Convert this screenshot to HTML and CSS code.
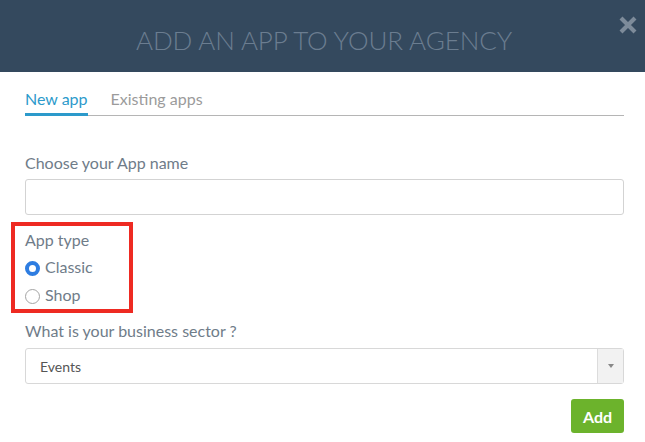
FILE: index.html
```html
<!DOCTYPE html>
<html>
<head>
<meta charset="utf-8">
<link rel="stylesheet" href="styles.css">
</head>
<body>
<div class="modal">
  <header class="modal-header">
    <h1 class="modal-title">ADD AN APP TO YOUR AGENCY</h1>
    <span class="close" aria-label="Close">
      <svg width="20" height="20" viewBox="0 0 20 20"><path d="M3 3 L17 17 M17 3 L3 17" stroke="#7d8b9a" stroke-width="4.2" stroke-linecap="butt"/></svg>
    </span>
  </header>
  <div class="modal-body">
    <nav class="tabs">
      <span class="tab active">New app</span>
      <span class="tab">Existing apps</span>
    </nav>
    <div class="field name-field">
      <label class="label">Choose your App name</label>
      <input class="input" type="text">
    </div>
    <div class="type-box">
      <div class="label">App type</div>
      <label class="radio"><span class="dot checked"></span>Classic</label>
      <label class="radio"><span class="dot"></span>Shop</label>
    </div>
    <div class="field sector-field">
      <label class="label">What is your business sector ?</label>
      <div class="select">
        <span class="select-value">Events</span>
        <span class="select-arrow"><svg width="6" height="4" viewBox="0 0 6 4"><path d="M0 0 L6 0 L3 4 Z" fill="#888"/></svg></span>
      </div>
    </div>
    <div class="actions">
      <button class="btn-add">Add</button>
    </div>
  </div>
</div>
</body>
</html>
```
FILE: styles.css
```css
* { box-sizing: border-box; }
html, body { margin: 0; padding: 0; background: #fff; }
body { font-family: Lato, "Open Sans", sans-serif; width: 645px; height: 442px; overflow: hidden; }
.modal-header {
  height: 72px;
  background: #34495e;
  display: flex;
  align-items: center;
  justify-content: center;
  position: relative;
}
.modal-title {
  margin: 0;
  font-weight: 300;
  font-size: 26px;
  color: #6b7d90;
  letter-spacing: -0.1px;
  padding-top: 8px;
  padding-left: 3px;
}
.close {
  position: absolute;
  right: 7px;
  top: 15px;
  display: flex;
}
.modal-body { padding: 0 21px 0 25px; }
.tabs {
  display: flex;
  gap: 23px;
  border-bottom: 1px solid #b5b5b5;
  margin-top: 17px;
  height: 27px;
}
.tab {
  font-size: 16px;
  color: #9b9b9b;
  line-height: 20px;
  margin-bottom: -1px;
}
.tab.active {
  color: #2c9acb;
  border-bottom: 3px solid #2c9acb;
}
.label {
  display: block;
  font-size: 16px;
  color: #6f7c89;
  line-height: 20px;
}
.name-field { margin-top: 37px; }
.input {
  display: block;
  width: 100%;
  height: 36px;
  margin-top: 6px;
  border: 1px solid #d3d3d3;
  border-radius: 3px;
  font-family: inherit;
}
.type-box {
  margin: 7px 0 0 -14px;
  width: 122px;
  height: 91px;
  border: 4px solid #ee2a22;
  padding: 4px 0 0 10px;
}
.radio {
  display: flex;
  align-items: center;
  gap: 5px;
  font-size: 16px;
  color: #6f7c89;
  line-height: 20px;
  margin-top: 7px;
}
.radio + .radio { margin-top: 8px; }
.dot {
  width: 15px;
  height: 15px;
  border-radius: 50%;
  border: 1px solid #a4a4a4;
  background: #fff;
  margin-top: 2px;
}
.dot.checked {
  border: 4px solid #2e7de1;
  background: #fff;
}
.sector-field { margin-top: 8px; }
.select {
  display: flex;
  align-items: center;
  height: 36px;
  margin-top: 7px;
  border: 1px solid #d8d8d8;
  border-radius: 3px;
}
.select-value {
  flex: 1;
  font-size: 14px;
  color: #555;
  padding-left: 14px;
}
.select-arrow {
  width: 26px;
  height: 100%;
  background: #f2f2f2;
  border-left: 1px solid #dcdcdc;
  display: flex;
  align-items: center;
  justify-content: center;
}
.actions {
  display: flex;
  justify-content: flex-end;
  margin-top: 15px;
}
.btn-add {
  width: 53px;
  height: 34px;
  border: 0;
  border-radius: 3px;
  background: #6cb32c;
  color: #fff;
  font-family: inherit;
  font-size: 16px;
  font-weight: 700;
  padding: 0;
}
```
